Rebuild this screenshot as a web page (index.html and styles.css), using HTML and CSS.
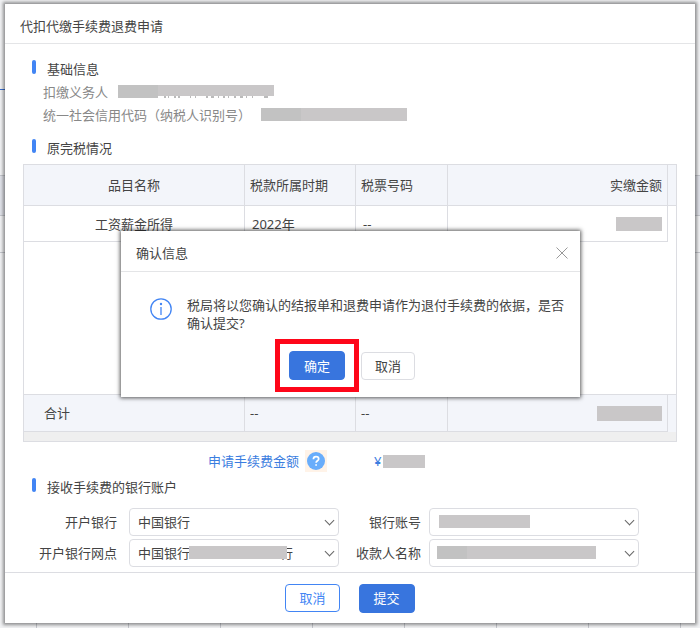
FILE: index.html
```html
<!DOCTYPE html>
<html lang="zh-CN">
<head>
<meta charset="utf-8">
<meta name="viewport" content="width=device-width, initial-scale=1">
<title>代扣代缴手续费退费申请</title>
<link rel="stylesheet" href="styles.css">
</head>
<body>
<main class="sheet">
  <header class="sheet-head"><h1>代扣代缴手续费退费申请</h1></header>

  <div class="sheet-body">
    <h2 class="section">基础信息</h2>
    <dl class="facts">
      <div class="fact"><dt>扣缴义务人</dt><dd>
        <span class="mask mask-name"></span>
        <svg class="specks" viewBox="0 0 112 2" aria-hidden="true"><path d="M6 1h2M10 1h1M16 1h2M20 1h2M32 1h1M37 1h1M48 1h2M53 1h3M60 1h1M65 1h2M70 1h1M76 1h2M82 1h3M88 1h1M94 1h1M106 1h4"/></svg>
      </dd></div>
      <div class="fact"><dt>统一社会信用代码（纳税人识别号）</dt><dd><span class="mask mask-code"></span></dd></div>
    </dl>

    <h2 class="section section-tax">原完税情况</h2>
    <div class="grid-box">
      <table class="grid">
        <colgroup><col class="c-item"><col class="c-period"><col class="c-ticket"><col class="c-amount"><col class="c-gutter"></colgroup>
        <thead>
          <tr><th class="center">品目名称</th><th>税款所属时期</th><th>税票号码</th><th class="right">实缴金额</th><td></td></tr>
        </thead>
        <tbody>
          <tr><td class="center">工资薪金所得</td><td class="inset">2022年</td><td class="inset">--</td><td class="right"><span class="mask mask-paid"></span></td><td class="blank"></td></tr>
          <tr class="filler"><td colspan="5"></td></tr>
        </tbody>
        <tfoot>
          <tr><td class="total">合计</td><td>--</td><td>--</td><td class="right"><span class="mask mask-total"></span></td><td class="blank"></td></tr>
        </tfoot>
      </table>
      <div class="scrollbar"></div>
    </div>

    <div class="fee">
      <span class="fee-label">申请手续费金额</span>
      <button class="help" type="button" aria-label="帮助">
        <svg viewBox="0 0 18 18" aria-hidden="true"><circle cx="9" cy="9" r="9"/><path d="M6.4 7.2C6.4 5.5 7.5 4.6 9 4.6S11.7 5.5 11.7 6.9C11.7 8.7 9.1 8.8 9.1 10.8M9.1 12.2V13.8"/></svg>
      </button>
      <span class="yen">¥</span><span class="mask mask-fee"></span>
    </div>

    <h2 class="section">接收手续费的银行账户</h2>
    <form class="account" id="account">
      <label for="bank">开户银行</label>
      <div class="field"><select id="bank"><option>中国银行</option></select></div>
      <label class="second" for="number">银行账号</label>
      <div class="field"><select id="number"><option></option></select><span class="mask over mask-number"></span></div>
      <label for="branch">开户银行网点</label>
      <div class="field"><select id="branch"><option>中国银行</option></select><span class="over tail">行</span><span class="mask over mask-branch"></span></div>
      <label class="second" for="payee">收款人名称</label>
      <div class="field"><select id="payee"><option></option></select><span class="mask over mask-payee"></span></div>
    </form>
  </div>

  <footer class="sheet-foot">
    <button class="btn outline" type="button">取消</button>
    <button class="btn primary" type="submit" form="account">提交</button>
  </footer>
</main>

<section class="confirm" role="dialog" aria-labelledby="confirm-title">
  <header class="confirm-head">
    <h2 id="confirm-title">确认信息</h2>
    <button class="close" type="button" aria-label="关闭"><svg viewBox="0 0 12 12" aria-hidden="true"><path d="M.5.5l11 11M11.5.5l-11 11"/></svg></button>
  </header>
  <div class="confirm-body">
    <svg class="info" viewBox="0 0 22 22" aria-hidden="true"><circle cx="11" cy="11" r="10.2"/><path d="M11 9v8"/><circle class="dot" cx="11" cy="6" r="1.2"/></svg>
    <p>税局将以您确认的结报单和退费申请作为退付手续费的依据，是否确认提交?</p>
  </div>
  <div class="confirm-foot">
    <span class="highlight"><button class="btn primary" type="button">确定</button></span>
    <button class="btn plain" type="button">取消</button>
  </div>
</section>
</body>
</html>
```

FILE: styles.css
```css
* { box-sizing: border-box; }

body {
  margin: 0;
  padding: 4px 5px 5px;
  min-height: 100vh;
  position: relative;
  background:
    linear-gradient(#3b6fd0, #3b6fd0) 0 89px / 5px 1px no-repeat,
    linear-gradient(transparent 175px, #c4c6cc 175px 176px, #dfe1e8 176px 215px, #c4c6cc 215px 216px, transparent 216px 252px, #c4c6cc 252px 253px, transparent 253px),
    repeating-linear-gradient(90deg, transparent 0 36px, #c4c6cc 36px 37px, transparent 37px 92px) 0 100% / 100% 5px no-repeat,
    #f0f1f3;
  color: #444;
  font: 13px/18px "Noto Sans", "Noto Sans CJK SC", sans-serif;
}

h1, h2, dl, dd, p { margin: 0; font-size: 13px; font-weight: 400; }

button, select { font: inherit; color: inherit; margin: 0; }

.sheet {
  background: #fff;
  box-shadow: 0 0 3px 2px rgba(0, 0, 0, .4);
}

.sheet-head {
  padding: 13px 15px 8px;
  border-bottom: 1px solid #e4e5e7;
}

.sheet-body { padding: 16px 18px 5px; }

.section {
  position: relative;
  padding-left: 24px;
}

.section::before {
  content: "";
  position: absolute;
  left: 9px;
  top: 0;
  width: 4px;
  height: 14px;
  border-radius: 2px;
  background: #4285f4;
}

.facts { padding: 2px 0 0 20px; color: #888; }
.fact { display: flex; align-items: center; height: 23px; }
.fact dd { position: relative; margin-left: 10px; }

.mask { display: block; height: 13px; background: #c9c7c8; }
.mask-name {
  width: 156px;
  background: linear-gradient(#c2c2c2, #c2c2c2) 0 0 / 40px 13px no-repeat, linear-gradient(#c9c7c8, #c9c7c8) 0 0 / 156px 11px no-repeat;
}
.mask-code { width: 146px; background: linear-gradient(90deg, #c2c2c2 40px, #c9c7c8 40px); }
.mask-paid { width: 46px; height: 14px; }
.mask-total { width: 65px; height: 15px; }
.mask-fee { width: 42px; }

.specks { position: absolute; left: 40px; top: 11px; width: 112px; height: 2px; }
.specks path { stroke: #777; fill: none; }

.section-tax { margin-top: 13px; }

.grid-box { margin-top: 7px; border: 1px solid #dcdde2; }

.grid { width: 100%; table-layout: fixed; border-collapse: separate; border-spacing: 0; }
.c-item { width: 221px; }
.c-period { width: 111px; }
.c-ticket { width: 92px; }
.c-gutter { width: 8px; }

.grid th, .grid td {
  padding: 0 5px;
  height: 36px;
  font-weight: 400;
  text-align: left;
  border-right: 1px solid #dcdde2;
  border-bottom: 1px solid #dcdde2;
}

.grid tr > :last-child { border-right: 0; padding: 0; }
.grid thead th, .grid thead td { height: 41px; background: #f3f5fa; }
.grid tfoot td { height: 37px; background: #f3f5fa; }
.grid .blank { border-bottom: 0; }
.grid .center { text-align: center; }
.grid .right { text-align: right; }
.grid .inset { padding-left: 7px; }
.grid .total { padding-left: 20px; }
.grid .filler td { height: 153px; }
.grid .mask { margin-left: auto; }
.scrollbar { height: 9px; background: #efefef; }

.fee {
  display: flex;
  align-items: center;
  height: 36px;
  padding: 2px 0 0 185px;
  color: #3b7de0;
}

.help { width: 18px; height: 18px; margin: 0 49px 0 8px; padding: 0; border: 0; background: #fff3e8; box-shadow: 0 0 0 2px #fff3e8; }
.help svg { display: block; width: 18px; height: 18px; }
.help circle { fill: #69adfb; }
.help path { fill: none; stroke: #fff; stroke-width: 1.7; }
.yen { margin-right: 2px; }

.account {
  display: grid;
  grid-template-columns: 106px 1fr 90px 1fr;
  row-gap: 3px;
  align-items: center;
  padding: 12px 38px 0 0;
}

.account label { padding-right: 12px; text-align: right; white-space: nowrap; }
.account .second { padding-right: 8px; }
.field { position: relative; }

.field select {
  display: block;
  width: 100%;
  height: 28px;
  padding: 0 28px 0 8px;
  border: 1px solid #dcdde2;
  border-radius: 4px;
  background: #fff;
  appearance: none;
}

.field::after {
  content: "";
  position: absolute;
  right: 6px;
  top: 9px;
  width: 6px;
  height: 6px;
  border: solid #666;
  border-width: 0 1px 1px 0;
  transform: rotate(45deg);
}

.over { position: absolute; top: 7px; pointer-events: none; }
.tail { left: 151px; top: 5px; }
.mask-branch { left: 60px; width: 98px; }
.mask-number { left: 10px; width: 91px; }
.mask-payee { left: 8px; width: 159px; background: linear-gradient(90deg, #c2c2c2 30px, #c9c7c8 30px); }

.sheet-foot {
  display: flex;
  justify-content: center;
  align-items: center;
  gap: 19px;
  height: 51px;
  border-top: 1px solid #dcdde2;
}

.btn { padding: 0 13px; height: 28px; border: 1px solid #dcdde2; border-radius: 4px; background: #fff; }
.btn.primary { height: 29px; padding: 0 14px; color: #fff; border-color: #3875de; background: #3875de; }
.btn.outline { color: #4285f4; border-color: #4285f4; }

.confirm {
  position: absolute;
  top: 231px;
  left: 121px;
  right: 120px;
  background: #fff;
  box-shadow: 0 0 4px 1px rgba(0, 0, 0, .65);
}

.confirm-head {
  display: flex;
  justify-content: space-between;
  align-items: center;
  padding: 13px 12px 9px 15px;
  border-bottom: 1px solid #e4e5e7;
}

.close { width: 12px; height: 12px; padding: 0; border: 0; background: none; }
.close svg { display: block; width: 12px; height: 12px; }
.close path { stroke: #999; fill: none; }

.confirm-body { display: flex; gap: 15px; padding: 24px 14px 7px 29px; }
.info { flex: none; width: 22px; height: 22px; margin-top: 2px; }
.info circle, .info path { fill: none; stroke: #4285f4; stroke-width: 1.3; }
.info .dot { fill: #4285f4; stroke: none; }

.confirm-foot { display: flex; align-items: center; gap: 2px; padding: 0 0 5px 154px; }
.highlight { display: block; padding: 7px 9px; border: 5px solid #fe0619; }
.highlight .btn { display: block; }
```
